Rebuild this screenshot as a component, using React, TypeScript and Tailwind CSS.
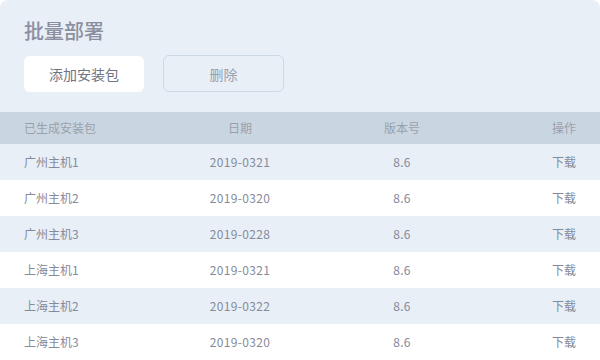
const rows = [
  { name: '广州主机1', date: '2019-0321', version: '8.6' },
  { name: '广州主机2', date: '2019-0320', version: '8.6' },
  { name: '广州主机3', date: '2019-0228', version: '8.6' },
  { name: '上海主机1', date: '2019-0321', version: '8.6' },
  { name: '上海主机2', date: '2019-0322', version: '8.6' },
  { name: '上海主机3', date: '2019-0320', version: '8.6' },
]

export default function App() {
  return (
    <div className="w-[600px] h-[360px] bg-white font-['Noto_Sans_CJK_SC','Noto_Sans',sans-serif]">
      <div className="w-full h-full rounded-lg overflow-hidden bg-[#e8eff7] flex flex-col">
        {/* Title + actions */}
        <div className="px-6 pt-[21px]">
          <h1 className="text-[20px] leading-5 font-medium text-[#8b8f9f]">批量部署</h1>
          <div className="mt-[14px] flex items-end gap-[19px]">
            <button className="w-[120px] h-9 rounded-md bg-white text-sm text-[#6f7485]">
              添加安装包
            </button>
            <button className="w-[121px] h-[37px] rounded-md border border-[#cbd9e7] text-sm text-[#9a9fae]">
              删除
            </button>
          </div>
        </div>

        {/* Table */}
        <div className="mt-5">
          <div className="grid grid-cols-[120px_192px_132px_1fr] items-center h-8 px-6 bg-[#c9d6e1] text-xs text-[#9a9fab]">
            <span>已生成安装包</span>
            <span className="text-center">日期</span>
            <span className="text-center">版本号</span>
            <span className="text-right">操作</span>
          </div>
          {rows.map((row, i) => (
            <div
              key={row.name}
              className={`grid grid-cols-[120px_192px_132px_1fr] items-center h-9 px-6 text-xs text-[#868a9a] ${i % 2 === 0 ? 'bg-[#e8eff7]' : 'bg-white'}`}
            >
              <span>{row.name}</span>
              <span className="text-center tracking-[0.35px]">{row.date}</span>
              <span className="text-center tracking-[0.35px]">{row.version}</span>
              <span className="text-right">下载</span>
            </div>
          ))}
        </div>
      </div>
    </div>
  )
}
